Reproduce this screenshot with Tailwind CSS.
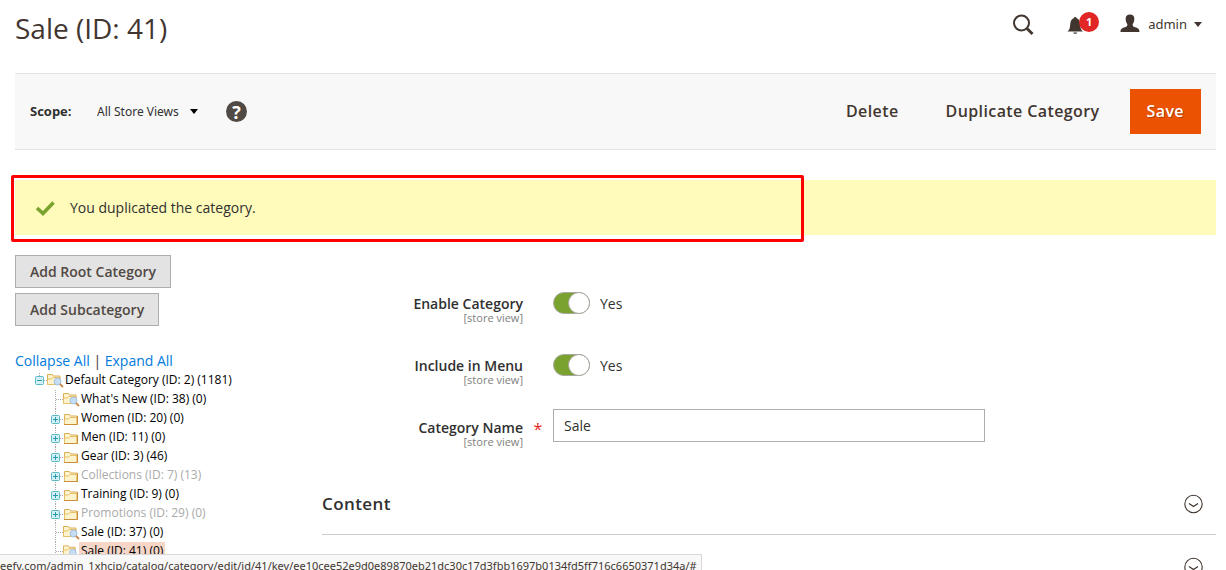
<!DOCTYPE html>
<html lang="en">
  <head>
    <meta charset="UTF-8" />
    <meta name="viewport" content="width=device-width, initial-scale=1.0" />
    <title>Sale (ID: 41) / Categories / Magento Admin</title>
    <script src="https://cdn.jsdelivr.net/npm/@tailwindcss/browser@4"></script>
  </head>
  <body class="h-screen overflow-hidden bg-white pl-[15px] pr-[10px] font-['Open_Sans',sans-serif] text-sm text-[#303030]">
    <!-- shared icons -->
    <svg class="hidden">
      <linearGradient id="fold" x1="0" y1="0" x2="1" y2="1">
        <stop offset="0" stop-color="#fff8dc" />
        <stop offset="1" stop-color="#f2bd35" />
      </linearGradient>
      <symbol id="folder" viewBox="0 0 17 19">
        <path d="M1.500 15.500V5.500h5l1 1.500h6.500v8.500z" fill="#fdf3cd" stroke="#dcae55" />
        <path d="M1.500 15.500V10h4l1.500-1.500h7v7z" fill="url(#fold)" stroke="#e8c069" />
        <path d="M1 15.500h13.500V7" fill="none" stroke="#c98f3c" />
      </symbol>
      <symbol id="leaf" viewBox="0 0 17 19">
        <path d="M.5 13.500V3.500h5l1 1.500h6.500v8.500z" fill="#fdf3cd" stroke="#dcae55" />
        <path d="M.5 13.500V8h4L6 6.500h7v7z" fill="url(#fold)" stroke="#e8c069" />
        <circle cx="10.500" cy="10.500" r="3.500" fill="#c5def5" stroke="#a3bfdf" />
        <path d="M13 13l3 3" stroke="#c98a4a" stroke-width="1.800" />
      </symbol>
      <symbol id="plus" viewBox="0 0 15 19">
        <path d="M7.500 0v19M12 10.500h3" stroke="#aaa" stroke-dasharray="1 1" />
        <rect x="3.500" y="6.500" width="8" height="8" rx="1" fill="#d3f1f5" stroke="#5bb9c7" />
        <path d="M5 10.500h5M7.500 8v5" stroke="#2a9bad" />
      </symbol>
      <symbol id="minus" viewBox="0 0 15 19">
        <path d="M7.500 2v5M12 9.500h3" stroke="#aaa" stroke-dasharray="1 1" />
        <rect x="3.500" y="5.500" width="8" height="8" rx="1" fill="#d3f1f5" stroke="#5bb9c7" />
        <path d="M5 9.500h5" stroke="#2a9bad" />
      </symbol>
      <symbol id="elbow" viewBox="0 0 15 19">
        <path d="M7.500 0v19M8 9.500h7" stroke="#aaa" stroke-dasharray="1 1" />
      </symbol>
      <symbol id="chevron" viewBox="0 0 20 20">
        <circle cx="9.500" cy="10" r="8.700" fill="none" stroke="#41362f" stroke-width="1.100" />
        <path d="M5 9.500l4.500 3L14 9.500" fill="none" stroke="#41362f" stroke-width="1.300" />
      </symbol>
    </svg>

    <header class="flex h-[73px] items-start justify-between">
      <h1 class="pt-2 text-[28px] leading-[40px] text-[#41362f]">Sale (ID: 41)</h1>
      <div class="flex items-center pt-3 pr-[14px] text-[#41362f]">
        <button type="button" aria-label="Search">
          <svg class="h-6 w-6" viewBox="0 0 24 24" fill="none" stroke="currentColor">
            <circle cx="10.500" cy="11" r="7.500" stroke-width="2" />
            <path d="M16 16.500l5.500 5.500" stroke-width="2.800" />
          </svg>
        </button>
        <button type="button" class="relative ml-[31px]" aria-label="Notifications">
          <svg class="h-6 w-6" viewBox="0 0 24 24" fill="currentColor">
            <path d="M1.500 19.500c2-1.500 2.500-3.500 2.700-7C4.400 8.500 6 6.500 8.200 6V5h2v1c2.200.5 3.800 2.500 4 6.500.2 3.500.7 5.500 2.700 7zM7.200 20.500h4c0 1.800-4 1.800-4 0z" />
          </svg>
          <span class="absolute left-[13px] top-0 flex h-5 w-5 items-center justify-center rounded-full bg-[#e22626] text-[11px] font-bold text-white">1</span>
        </button>
        <button type="button" class="ml-[30px] flex items-center">
          <svg class="h-6 w-5" viewBox="0 0 20 24" fill="currentColor">
            <path d="M10 2.500c3 0 4.500 1.500 4.300 4.500 0 2.500-.8 4-1.600 5-.2 2 .3 2.500 2.300 3.200 3.500 1 4.500 1.800 4.500 4.800H.5c0-3 1-3.800 4.500-4.800 2-.7 2.500-1.200 2.300-3.200-.8-1-1.600-2.500-1.600-5C5.500 4 7 2.500 10 2.500z" />
          </svg>
          <span class="ml-2 font-['Noto_Sans',sans-serif] text-[13px]">admin</span>
          <svg class="ml-[7px] h-[5px] w-2" viewBox="0 0 8 5" fill="currentColor"><path d="M0 0h8L4 5z" /></svg>
        </button>
      </div>
    </header>

    <div class="flex h-[77px] items-center border-y border-[#e3e3e3] bg-[#f8f8f8] px-[15px]">
      <label for="scope" class="w-[67px] text-[13px] font-bold">Scope:</label>
      <div class="relative flex items-center">
        <select id="scope" class="appearance-none bg-transparent pr-[19px] font-['Noto_Sans',sans-serif] text-xs">
          <option>All Store Views</option>
        </select>
        <svg class="pointer-events-none absolute right-0 h-[5px] w-2" viewBox="0 0 8 5"><path d="M0 0h8L4 5z" /></svg>
      </div>
      <a href="#" aria-label="What is this?" class="ml-7 flex h-[21px] w-[21px] items-center justify-center rounded-full bg-[#514943] text-lg font-bold text-white">?</a>
      <div class="ml-auto flex items-center pb-px text-base font-semibold tracking-wide text-[#41362f]">
        <button type="button">Delete</button>
        <button type="button" class="ml-[47px]">Duplicate Category</button>
        <button type="button" class="ml-[30px] h-[45px] bg-[#eb5202] px-[17px] text-white text-shadow-[1px_1px_0_rgba(0,0,0,0.25)]">Save</button>
      </div>
    </div>

    <div class="relative mt-[30px] flex h-[55px] items-center bg-[#fffbbb] pl-5">
      <svg class="h-5 w-5" viewBox="0 0 20 20" fill="none" stroke="#79a22e" stroke-width="3.600"><path d="M2 10l6 5.500L18.500 4.500" /></svg>
      <p class="ml-[15px]">You duplicated the category.</p>
      <div class="absolute -left-1 -top-[5px] h-[67px] w-[793px] rounded-xs border-3 border-[#f00]"></div>
    </div>

    <div class="mt-5 flex">
      <aside class="w-[307px] shrink-0">
        <div class="flex flex-col items-start gap-[5px] font-semibold text-[#514943]">
          <button type="button" class="h-[33px] border border-[#adadad] bg-[#e3e3e3] px-[14px]">Add Root Category</button>
          <button type="button" class="h-[33px] border border-[#adadad] bg-[#e3e3e3] px-[14px]">Add Subcategory</button>
        </div>
        <div class="mt-[25px] leading-5">
          <a href="#" class="text-[#007bdb]">Collapse All</a>
          <span class="text-[#41362f]">|</span>
          <a href="#" class="text-[#007bdb]">Expand All</a>
        </div>
        <ul class="pl-[17px] text-xs leading-[17px] text-black">
          <li>
            <a href="#" class="flex h-[19px]">
              <svg class="h-[19px] w-[15px]"><use href="#minus" /></svg>
              <svg class="mr-px h-[19px] w-[17px]"><use href="#leaf" /></svg>
              <span>Default Category (ID: 2) (1181)</span>
            </a>
            <ul class="pl-4">
              <li>
                <a href="#" class="flex h-[19px]">
                  <svg class="h-[19px] w-[15px]"><use href="#elbow" /></svg>
                  <svg class="mr-px h-[19px] w-[17px]"><use href="#leaf" /></svg>
                  <span>What's New (ID: 38) (0)</span>
                </a>
              </li>
              <li>
                <a href="#" class="flex h-[19px]">
                  <svg class="h-[19px] w-[15px]"><use href="#plus" /></svg>
                  <svg class="mr-px h-[19px] w-[17px]"><use href="#folder" /></svg>
                  <span>Women (ID: 20) (0)</span>
                </a>
              </li>
              <li>
                <a href="#" class="flex h-[19px]">
                  <svg class="h-[19px] w-[15px]"><use href="#plus" /></svg>
                  <svg class="mr-px h-[19px] w-[17px]"><use href="#folder" /></svg>
                  <span>Men (ID: 11) (0)</span>
                </a>
              </li>
              <li>
                <a href="#" class="flex h-[19px]">
                  <svg class="h-[19px] w-[15px]"><use href="#plus" /></svg>
                  <svg class="mr-px h-[19px] w-[17px]"><use href="#folder" /></svg>
                  <span>Gear (ID: 3) (46)</span>
                </a>
              </li>
              <li>
                <a href="#" class="flex h-[19px] text-[#aaa]">
                  <svg class="h-[19px] w-[15px]"><use href="#plus" /></svg>
                  <svg class="mr-px h-[19px] w-[17px]"><use href="#folder" /></svg>
                  <span>Collections (ID: 7) (13)</span>
                </a>
              </li>
              <li>
                <a href="#" class="flex h-[19px]">
                  <svg class="h-[19px] w-[15px]"><use href="#plus" /></svg>
                  <svg class="mr-px h-[19px] w-[17px]"><use href="#folder" /></svg>
                  <span>Training (ID: 9) (0)</span>
                </a>
              </li>
              <li>
                <a href="#" class="flex h-[19px] text-[#aaa]">
                  <svg class="h-[19px] w-[15px]"><use href="#plus" /></svg>
                  <svg class="mr-px h-[19px] w-[17px]"><use href="#folder" /></svg>
                  <span>Promotions (ID: 29) (0)</span>
                </a>
              </li>
              <li>
                <a href="#" class="flex h-[19px]">
                  <svg class="h-[19px] w-[15px]"><use href="#elbow" /></svg>
                  <svg class="mr-px h-[19px] w-[17px]"><use href="#leaf" /></svg>
                  <span>Sale (ID: 37) (0)</span>
                </a>
              </li>
              <li>
                <a href="#" class="flex h-[19px]">
                  <svg class="h-[19px] w-[15px]"><use href="#elbow" /></svg>
                  <svg class="h-[19px] w-4"><use href="#leaf" /></svg>
                  <span class="bg-[#f5d6c7] px-[2px]">Sale (ID: 41) (0)</span>
                </a>
              </li>
            </ul>
          </li>
        </ul>
      </aside>

      <main class="min-w-0 flex-1">
        <div class="mt-9 flex h-[62px]">
          <label for="enable" class="w-[201px] pt-[5px] text-right font-semibold leading-4">
            Enable Category
            <span class="block text-[11px] font-normal leading-3 text-[#808080]">[store view]</span>
          </label>
          <div class="ml-[30px] flex h-[24px] items-center">
            <input id="enable" type="checkbox" checked class="h-[22px] w-[37px] appearance-none rounded-full border border-[#aaa6a0] bg-[#79a22e] before:ml-[14px] before:-mt-px before:block before:h-[22px] before:w-[22px] before:rounded-full before:border before:border-[#aaa6a0] before:bg-white" />
            <span class="ml-[10px] pt-px">Yes</span>
          </div>
        </div>
        <div class="flex h-[62px]">
          <label for="menu" class="w-[201px] pt-[5px] text-right font-semibold leading-4">
            Include in Menu
            <span class="block text-[11px] font-normal leading-3 text-[#808080]">[store view]</span>
          </label>
          <div class="ml-[30px] flex h-[24px] items-center">
            <input id="menu" type="checkbox" checked class="h-[22px] w-[37px] appearance-none rounded-full border border-[#aaa6a0] bg-[#79a22e] before:ml-[14px] before:-mt-px before:block before:h-[22px] before:w-[22px] before:rounded-full before:border before:border-[#aaa6a0] before:bg-white" />
            <span class="ml-[10px] pt-px">Yes</span>
          </div>
        </div>
        <div class="flex h-[62px]">
          <label for="name" class="w-[201px] pt-[5px] text-right font-semibold leading-4">
            Category Name
            <span class="block text-[11px] font-normal leading-3 text-[#808080]">[store view]</span>
          </label>
          <span class="w-[30px] pt-1 text-center text-base leading-5 text-[#e22626]">*</span>
          <div class="-mt-2 flex-1 pt-[2px]">
            <input id="name" type="text" value="Sale" class="h-[33px] w-full max-w-[432px] border border-[#adadad] px-[10px]" />
          </div>
        </div>

        <section class="flex h-[58px] items-center justify-between border-b border-[#ccc] pb-1 pr-3">
          <h2 class="text-[17px] font-semibold leading-7 tracking-wide">Content</h2>
          <button type="button" aria-label="Expand Content"><svg class="h-5 w-5"><use href="#chevron" /></svg></button>
        </section>
        <section class="flex h-[63px] items-center justify-end pr-3">
          <button type="button" aria-label="Expand section"><svg class="h-5 w-5"><use href="#chevron" /></svg></button>
        </section>
      </main>
    </div>

    <!-- browser link status -->
    <div class="fixed bottom-0 left-0 h-4 overflow-hidden whitespace-nowrap border-r border-t border-[#d8d8d8] bg-[#f8f8f8] pr-1 pt-[2px] font-['Noto_Sans',sans-serif] text-[11px] leading-[18px] text-[#41362f]">eefy.com/admin_1xhcip/catalog/category/edit/id/41/key/ee10cee52e9d0e89870eb21dc30c17d3fbb1697b0134fd5ff716c6650371d34a/#</div>
  </body>
</html>
